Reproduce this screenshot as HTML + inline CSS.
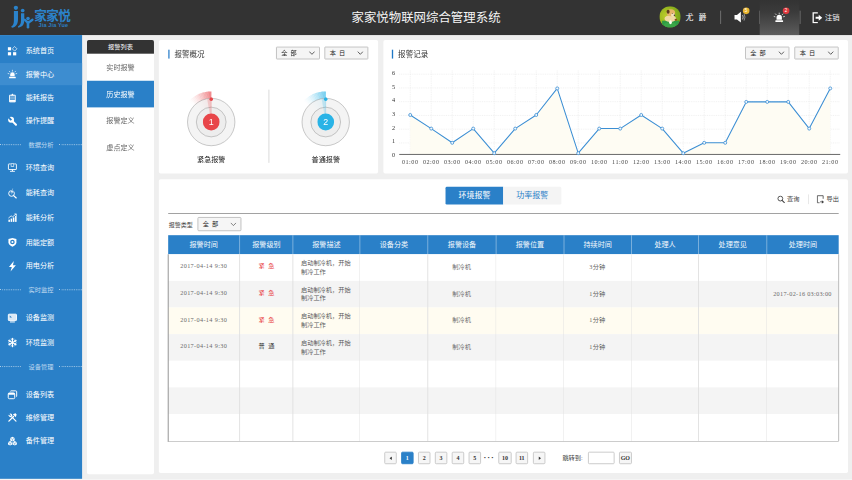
<!DOCTYPE html><html><head><meta charset="utf-8"><title>家家悦物联网综合管理系统</title><style>
*{box-sizing:border-box;margin:0;padding:0}
html,body{width:852px;height:480px;overflow:hidden;background:#efefef}
body{font-family:"Liberation Sans","Noto Sans CJK SC",sans-serif;color:#333}
#root{position:absolute;left:0;top:0;width:1920px;height:1082px;transform:scale(0.44375);transform-origin:0 0;overflow:hidden}
#inner{position:absolute;left:0;top:0;width:1920px;height:1082px}
.abs{position:absolute}
.x{display:inline-block;white-space:nowrap}
.t{position:absolute;white-space:nowrap;line-height:1}
.c{text-align:center}
#hdr{left:0;top:0;width:1920px;height:79px;background:#333}
#side{left:0;top:79px;width:184.5px;height:1000.4px;background:#2a80c8}
.si{position:absolute;left:0;width:184.5px;height:50px}
.si .t{left:58px;top:18px;font-size:16px;color:#fff}
.si svg{position:absolute;left:17px;top:15px;width:22px;height:22px;overflow:visible}
.si.act{background:#3d8dd0}
.sec{position:absolute;left:0;width:184.5px;height:20px}
.sec .t{left:0;width:184.5px;text-align:center;font-size:14px;color:#c0daf0;top:3px;letter-spacing:0}
.sec i{position:absolute;top:8.6px;height:0;border-top:2px dotted rgba(255,255,255,.62)}
#sub{left:196px;top:90px;width:151px;height:979px;background:#fff;border-radius:4px;overflow:hidden}
#sub .h{position:absolute;left:0;top:0;width:100%;height:31px;background:#333;color:#fff;font-size:14px;text-align:center;line-height:33px}
#sub .it{position:absolute;left:0;width:100%;height:60.5px;font-size:16px;line-height:61.5px;text-align:center;color:#666}
#sub .it.act{background:#2a80c8;color:#fff}
.panel{position:absolute;background:#fff;border-radius:4px}
.ptitle{position:absolute;font-size:17px;color:#333;line-height:20px;white-space:nowrap}
.pbar{position:absolute;width:3px;height:20px;background:#1f78c6}
.sel{position:absolute;height:29.5px;margin-top:-1px;background:#f5f5f5;border:2px solid #bcbcbc;border-radius:2px;font-size:14px;line-height:25px;color:#222;padding-left:10px;white-space:nowrap;letter-spacing:1.5px}
.sel svg{position:absolute;right:9px;top:8px;width:14px;height:9px}
.th{position:absolute;top:0;height:43px;line-height:43px;text-align:center;color:#f3f8fc;font-size:16px;border-left:2px solid rgba(255,255,255,.42);white-space:nowrap}
.row{position:absolute;left:0;width:100%;height:60px}
.cell{position:absolute;top:0;height:60px;font-size:14px;color:#5a5a5a;white-space:nowrap}
.num{font-family:"Liberation Serif",serif;letter-spacing:.8px;color:#6a6a6a}
.pg{position:absolute;top:0;height:28px;width:28px;border:2px solid #c6c6c6;border-radius:3px;background:#f6f6f6;font-family:"Liberation Serif",serif;font-size:13.5px;font-weight:bold;line-height:24.5px;text-align:center;color:#333}
</style></head><body><div id="root"><div id="inner">
<div id="hdr" class="abs">
<svg class="abs" style="left:0;top:0;width:81.1px;height:78.9px" viewBox="0 0 36 35">
<g fill="#2b83cb"><path d="M13.9 11 H18 V19.5 C18 24.6 15.6 27.1 11.9 27.7 L11.3 26.3 C13.5 25.4 13.9 23.2 13.9 20 Z"/><path d="M21 13.2 H24.3 V20.6 C24.3 24.9 22 27.1 18.4 27.7 L17.9 26.4 C20.1 25.5 21 23.6 21 20.8 Z"/><circle cx="15.9" cy="7.8" r="2.15"/><circle cx="22.7" cy="10.5" r="1.85"/><circle cx="28" cy="18.6" r="1.8"/></g><g fill="none" stroke="#2b83cb" stroke-linecap="round"><path d="M24.8 19.7 L28 23 L32.5 19.7" stroke-width="2.3"/><path d="M28 23 L28 27.2" stroke-width="2.6"/></g>
</svg>
<div class="t lg" style="left:77.3px;top:19.8px;font-size:28.5px;letter-spacing:-1.5px;color:#2b83cb;font-weight:bold"><span class="x" style="width:82.5px">家家悦</span></div>
<div class="t" style="left:86.8px;top:50.3px;font-weight:bold;font-size:12.5px;color:#2b7fc4;letter-spacing:.3px">Jia Jia Yue</div>
<div class="t c" style="left:660px;width:600px;top:26px;font-size:28px;color:#f6f6f6"><span class="x" style="width:336px">家家悦物联网综合管理系统</span></div>
<svg class="abs" style="left:1486.3px;top:14.299999999999997px;width:48px;height:48px" viewBox="0 0 48 48">
<defs><clipPath id="av"><circle cx="24" cy="24" r="24"/></clipPath><radialGradient id="avg" cx="0.3" cy="0.45" r="0.8"><stop offset="0" stop-color="#bccb2a"/><stop offset="0.6" stop-color="#8fb21c"/><stop offset="1" stop-color="#6f9a1a"/></radialGradient></defs><g clip-path="url(#av)"><rect width="48" height="48" fill="url(#avg)"/><path d="M6 33 H44 V48 H6 Z" fill="#2f9b45"/><ellipse cx="24" cy="42" rx="14" ry="6" fill="#3aa648"/><ellipse cx="24.5" cy="28" rx="13" ry="7.5" fill="#f0d9a4"/><ellipse cx="25.8" cy="14.6" rx="9.6" ry="8" fill="#e7b469"/><ellipse cx="19.6" cy="12.4" rx="3.4" ry="4.6" fill="#5e3c1d"/><ellipse cx="30.6" cy="19.6" rx="4.4" ry="3.8" fill="#f5e2bd"/><circle cx="33.8" cy="20.6" r="1.7" fill="#3a3230"/><circle cx="29" cy="16.6" r="1.1" fill="#3a3230"/><ellipse cx="25" cy="36" rx="3" ry="4.4" fill="#fffdf6"/><ellipse cx="37" cy="30.4" rx="2.8" ry="2.2" fill="#8a4a1e"/></g></svg>
<div class="t" style="left:1545.0px;top:29px;font-size:18px;color:#fff;letter-spacing:3px"><span class="x" style="width:50.02px">尤 爵</span></div>
<div class="abs" style="left:1622.5px;top:24px;width:2px;height:30px;background:#757575"></div>
<div class="abs" style="left:1711.3px;top:24px;width:2px;height:30px;background:#757575"></div>
<div class="abs" style="left:1801.5px;top:24px;width:2px;height:30px;background:#757575"></div>
<div class="abs" style="left:1712.2px;top:0;width:89.2px;height:79px;background:linear-gradient(#333 0%,#3b3b3b 35%,#5c5c5c 100%)"></div>
<svg class="abs" style="left:1654.1px;top:24.5px;width:30px;height:27.5px" viewBox="0 0 27 25"><path d="M1 8 H6 L14 1.5 V23.5 L6 17 H1 Z" fill="#fff"/><path d="M17.5 8 Q20 12.5 17.5 17" fill="none" stroke="#ddd" stroke-width="1.6"/><path d="M20.5 5.5 Q24.5 12.5 20.5 19.5" fill="none" stroke="#bbb" stroke-width="1.4"/></svg>
<div class="abs c" style="left:1673.6px;top:16.6px;width:15px;height:15px;border-radius:8px;background:#e9b52f;color:#fff;font-size:10px;line-height:15px">5</div>
<svg class="abs" style="left:1742.9px;top:28px;width:26px;height:22.5px" viewBox="0 0 30 26"><path d="M8 19 V13 A7 7 0 0 1 22 13 V19 Z" fill="#fff"/><rect x="5" y="20.5" width="20" height="4.5" rx="1" fill="#fff"/><g stroke="#fff" stroke-width="1.8" stroke-linecap="round"><path d="M15 0.8 V3.6"/><path d="M5.2 3.8 L7.2 6"/><path d="M24.8 3.8 L22.8 6"/><path d="M1.2 10.5 L4 11.3"/><path d="M28.8 10.5 L26 11.3"/></g></svg>
<div class="abs c" style="left:1763.8px;top:17.1px;width:15px;height:15px;border-radius:8px;background:#e0393e;color:#fff;font-size:10px;line-height:15px">2</div>
<svg class="abs" style="left:1830.3px;top:27px;width:24px;height:26px" viewBox="0 0 24 26"><path d="M13 2 H2.5 V24 H13" fill="none" stroke="#fff" stroke-width="3"/><path d="M8 10.5 H15 V6 L23 13 L15 20 V15.5 H8 Z" fill="#fff"/></svg>
<div class="t" style="left:1859.2px;top:30.5px;font-size:16.5px;color:#f4f4f4"><span class="x" style="width:34px">注销</span></div>
</div>
<div id="side" class="abs">
<div class="si" style="top:10.0px"><svg viewBox="0 0 22 22"><g fill="#fff"><rect x="0.8" y="2.4" width="7.2" height="7.2"/><rect x="0.8" y="13.6" width="7.2" height="7.2"/><rect x="12.4" y="13.6" width="7.2" height="7.2"/></g><path d="M16 0.8 L21.2 6 L16 11.2 L10.8 6 Z" fill="none" stroke="#fff" stroke-width="1.5"/></svg><div class="t"><span class="x" style="width:64px">系统首页</span></div></div>
<div class="si act" style="top:63.2px"><svg viewBox="0 0 22 22"><path d="M6 15 V11 A5 5 0 0 1 16 11 V15 Z" fill="#fff"/><rect x="3.5" y="16" width="15" height="3.6" rx=".8" fill="#fff"/><g stroke="#fff" stroke-width="1.5" stroke-linecap="round"><path d="M11 1.2 V3.4"/><path d="M4 3.6 L5.5 5.2"/><path d="M18 3.6 L16.5 5.2"/><path d="M1.2 8.6 L3.2 9.2"/><path d="M20.8 8.6 L18.8 9.2"/></g></svg><div class="t"><span class="x" style="width:64px">报警中心</span></div></div>
<div class="si" style="top:115.7px"><svg viewBox="0 0 22 22"><path d="M4.6 4.6 H17.4 V19.6 H4.6 Z" fill="none" stroke="#fff" stroke-width="2.2"/><path d="M7.5 5 L11 0.8 L14.5 5 Z" fill="#fff"/><g stroke="#fff" stroke-width="1"><path d="M6 8.3 H16"/><path d="M6 10.8 H16"/><path d="M6 13.3 H16"/></g><rect x="5" y="15.4" width="12" height="4" fill="#fff"/></svg><div class="t"><span class="x" style="width:64px">能耗报告</span></div></div>
<div class="si" style="top:167.8px"><svg viewBox="0 0 22 22"><circle cx="8" cy="8" r="6.7" fill="#fff"/><path d="M8.6 8.6 L1.2 1.2" stroke="#2a80c8" stroke-width="4.4"/><path d="M11.5 11.5 L19 19" stroke="#fff" stroke-width="4.6" stroke-linecap="round"/></svg><div class="t"><span class="x" style="width:64px">操作提醒</span></div></div>
<div class="sec" style="top:237.5px"><i style="left:0;width:47px"></i><div class="t"><span class="x" style="width:56px">数据分析</span></div><i style="left:134px;width:51px"></i></div>
<div class="si" style="top:273.2px"><svg viewBox="0 0 22 22"><rect x="2" y="2.5" width="18" height="12.5" rx="1" fill="none" stroke="#fff" stroke-width="2"/><rect x="7" y="1" width="8" height="8" fill="#2a80c8"/><rect x="8" y="2" width="6" height="6" fill="none" stroke="#fff" stroke-width="1.4"/><rect x="9.8" y="15" width="2.4" height="3.4" fill="#fff"/><rect x="5.5" y="18" width="11" height="2" fill="#fff"/></svg><div class="t"><span class="x" style="width:64px">环境查询</span></div></div>
<div class="si" style="top:330.0px"><svg viewBox="0 0 22 22"><circle cx="9" cy="12" r="6.4" fill="none" stroke="#fff" stroke-width="2.2"/><path d="M13.8 16.8 L19.6 22" stroke="#fff" stroke-width="2.8" stroke-linecap="round"/><path d="M12 0 L6.2 9.6 H9.4 L8 15.4 L14 6.6 H10.6 L12.8 0 Z" fill="#fff" stroke="#2a80c8" stroke-width=".9"/></svg><div class="t"><span class="x" style="width:64px">能耗查询</span></div></div>
<div class="si" style="top:386.4px"><svg viewBox="0 0 22 22"><g fill="#fff"><rect x="2" y="15" width="3.4" height="5"/><rect x="7" y="12.5" width="3.4" height="7.5"/><rect x="12" y="10" width="3.4" height="10"/><rect x="17" y="6.5" width="3.4" height="13.5"/></g><path d="M2 11.5 L8 6.5 L11.5 8.5 L19 2.5" fill="none" stroke="#fff" stroke-width="1.8"/><path d="M15.5 2 H20 V6.5" fill="none" stroke="#fff" stroke-width="1.6"/></svg><div class="t"><span class="x" style="width:64px">能耗分析</span></div></div>
<div class="si" style="top:440.9px"><svg viewBox="0 0 22 22"><path d="M11 1.2 L20 3.8 V11 Q20 17.2 11 21 Q2 17.2 2 11 V3.8 Z" fill="#fff"/><circle cx="11" cy="10.4" r="5.2" fill="#2a80c8"/><circle cx="11" cy="10.4" r="2.3" fill="#fff"/></svg><div class="t"><span class="x" style="width:64px">用能定额</span></div></div>
<div class="si" style="top:494.8px"><svg viewBox="0 0 22 22"><path d="M14.2 -1 L3.2 12.6 H9.6 L6.8 23 L18.8 8.6 H12.2 Z" fill="#fff"/></svg><div class="t"><span class="x" style="width:64px">用电分析</span></div></div>
<div class="sec" style="top:564.7px"><i style="left:0;width:47px"></i><div class="t"><span class="x" style="width:56px">实时监控</span></div><i style="left:134px;width:51px"></i></div>
<div class="si" style="top:612.2px"><svg viewBox="0 0 22 22"><rect x="1.8" y="2" width="18.4" height="14.4" rx="1.5" fill="#dbe9f6" stroke="#fff" stroke-width="2"/><path d="M5 5 L10 9.5 L5 9.5 Z" fill="#2a80c8"/><rect x="5.5" y="18.4" width="11" height="2.2" fill="#fff"/></svg><div class="t"><span class="x" style="width:64px">设备监测</span></div></div>
<div class="si" style="top:667.4px"><svg viewBox="0 0 22 22"><g stroke="#fff" stroke-width="2.6" stroke-linecap="round"><path d="M11 1.5 V20.5"/><path d="M2.8 6.2 L19.2 15.8"/><path d="M19.2 6.2 L2.8 15.8"/></g><g stroke="#fff" stroke-width="1.9" fill="none"><path d="M8 2.4 L11 5.4 L14 2.4"/><path d="M8 19.6 L11 16.6 L14 19.6"/><path d="M2 9.8 L6 8.2 L5 4"/><path d="M20 12.2 L16 13.8 L17 18"/><path d="M20 9.8 L16 8.2 L17 4"/><path d="M2 12.2 L6 13.8 L5 18"/></g></svg><div class="t"><span class="x" style="width:64px">环境监测</span></div></div>
<div class="sec" style="top:737.1px"><i style="left:0;width:47px"></i><div class="t"><span class="x" style="width:56px">设备管理</span></div><i style="left:134px;width:51px"></i></div>
<div class="si" style="top:784.6px"><svg viewBox="0 0 22 22"><rect x="1.6" y="6.5" width="14.5" height="13" rx="2.4" fill="none" stroke="#fff" stroke-width="2.2"/><rect x="1.6" y="6.5" width="14.5" height="4" rx="1.5" fill="#fff"/><path d="M6.5 3 Q6.5 1.8 8 1.8 H18.4 Q20.6 1.8 20.6 4 V13.5 Q20.6 15 19.4 15" fill="none" stroke="#fff" stroke-width="2.2"/></svg><div class="t"><span class="x" style="width:64px">设备列表</span></div></div>
<div class="si" style="top:836.4px"><svg viewBox="0 0 22 22"><path d="M3 19 L13.5 8.5" stroke="#fff" stroke-width="3" stroke-linecap="round"/><path d="M12 3.5 L18 1.5 L20.5 4 L18.5 10 Z" fill="#fff"/><path d="M19 19 L9.5 9.5" stroke="#fff" stroke-width="2.6" stroke-linecap="round"/><circle cx="6.5" cy="6" r="4" fill="#fff"/><path d="M3 2.5 L7 6.5" stroke="#2a80c8" stroke-width="2.4"/></svg><div class="t"><span class="x" style="width:64px">维修管理</span></div></div>
<div class="si" style="top:888.5px"><svg viewBox="0 0 22 22"><g fill="#fff"><path d="M11 1.5 L16 4.2 V9.5 L11 12.2 L6 9.5 V4.2 Z"/><path d="M5.8 11 L10.6 13.6 V18.6 L5.8 21.2 L1 18.6 V13.6 Z"/><path d="M16.2 11 L21 13.6 V18.6 L16.2 21.2 L11.4 18.6 V13.6 Z"/></g><g stroke="#2a80c8" stroke-width="1" fill="none"><path d="M6 4.2 L11 6.9 L16 4.2 M11 6.9 V12"/><path d="M1 13.6 L5.8 16.2 L10.6 13.6 M5.8 16.2 V21"/><path d="M11.4 13.6 L16.2 16.2 L21 13.6 M16.2 16.2 V21"/></g></svg><div class="t"><span class="x" style="width:64px">备件管理</span></div></div>
</div>
<div id="sub" class="abs"><div class="h"><span class="x" style="width:56px">报警列表</span></div>
<div class="it" style="top:31.0px"><span class="x" style="width:64px">实时报警</span></div>
<div class="it act" style="top:91.5px"><span class="x" style="width:64px">历史报警</span></div>
<div class="it" style="top:152.0px"><span class="x" style="width:64px">报警定义</span></div>
<div class="it" style="top:212.5px"><span class="x" style="width:64px">虚点定义</span></div>
</div>
<div class="panel" style="left:358px;top:90px;width:494px;height:301px">
<div class="pbar" style="left:20.8px;top:21.5px"></div>
<div class="ptitle" style="left:35.0px;top:22.6px"><span class="x" style="width:68px">报警概况</span></div>
<div class="sel" style="left:264.0px;top:15.5px;width:98.7px"><span class="x" style="width:36.39px">全 部</span><svg viewBox="0 0 14 9"><path d="M1 1.2 L7 7.4 L13 1.2" fill="none" stroke="#444" stroke-width="1.9"/></svg></div>
<div class="sel" style="left:373.0px;top:15.5px;width:99.2px"><span class="x" style="width:36.39px">本 日</span><svg viewBox="0 0 14 9"><path d="M1 1.2 L7 7.4 L13 1.2" fill="none" stroke="#444" stroke-width="1.9"/></svg></div>
<svg class="abs" style="left:38.1px;top:104.7px;width:160px;height:160px" viewBox="-80 -80 160 160"><path d="M0 0 L-50.46 -47.06 A69 69 0 0 1 -47.64 -49.92 Z" fill="#e8464a" fill-opacity="0.007"/><path d="M0 0 L-47.99 -49.58 A69 69 0 0 1 -45.02 -52.29 Z" fill="#e8464a" fill-opacity="0.022"/><path d="M0 0 L-45.38 -51.98 A69 69 0 0 1 -42.28 -54.53 Z" fill="#e8464a" fill-opacity="0.043"/><path d="M0 0 L-42.66 -54.23 A69 69 0 0 1 -39.43 -56.62 Z" fill="#e8464a" fill-opacity="0.067"/><path d="M0 0 L-39.82 -56.35 A69 69 0 0 1 -36.48 -58.57 Z" fill="#e8464a" fill-opacity="0.096"/><path d="M0 0 L-36.88 -58.32 A69 69 0 0 1 -33.43 -60.36 Z" fill="#e8464a" fill-opacity="0.129"/><path d="M0 0 L-33.85 -60.13 A69 69 0 0 1 -30.29 -62.00 Z" fill="#e8464a" fill-opacity="0.165"/><path d="M0 0 L-30.72 -61.78 A69 69 0 0 1 -27.07 -63.47 Z" fill="#e8464a" fill-opacity="0.205"/><path d="M0 0 L-27.51 -63.28 A69 69 0 0 1 -23.78 -64.77 Z" fill="#e8464a" fill-opacity="0.247"/><path d="M0 0 L-24.23 -64.60 A69 69 0 0 1 -20.43 -65.91 Z" fill="#e8464a" fill-opacity="0.292"/><path d="M0 0 L-20.89 -65.76 A69 69 0 0 1 -17.03 -66.87 Z" fill="#e8464a" fill-opacity="0.340"/><path d="M0 0 L-17.49 -66.75 A69 69 0 0 1 -13.58 -67.65 Z" fill="#e8464a" fill-opacity="0.391"/><path d="M0 0 L-14.05 -67.55 A69 69 0 0 1 -10.09 -68.26 Z" fill="#e8464a" fill-opacity="0.445"/><path d="M0 0 L-10.57 -68.19 A69 69 0 0 1 -6.58 -68.69 Z" fill="#e8464a" fill-opacity="0.501"/><path d="M0 0 L-7.06 -68.64 A69 69 0 0 1 -3.05 -68.93 Z" fill="#e8464a" fill-opacity="0.559"/><path d="M0 0 L-3.54 -68.91 A69 69 0 0 1 0.48 -69.00 Z" fill="#e8464a" fill-opacity="0.620"/><circle r="53.4" fill="#f2f2f2" fill-opacity=".86" stroke="#9a9a9a" stroke-width="1.2"/><circle r="33.5" fill="#ececec" fill-opacity=".9" stroke="#9a9a9a" stroke-width="1.2"/><path d="M0 0 L-9.03 -51.21 A52 52 0 0 1 0 -52 Z" fill="#e8464a" fill-opacity=".2"/><path d="M0 0 V-52" stroke="#e8464a" stroke-width="1.2" opacity=".35"/><circle cx="0" cy="-51.6" r="4" fill="#e8464a"/><circle r="19" fill="#e8464a"/><text x="0" y="6.8" text-anchor="middle" font-family="Liberation Sans, sans-serif" font-size="20" fill="#fff">1</text></svg>
<svg class="abs" style="left:295.7px;top:104.7px;width:160px;height:160px" viewBox="-80 -80 160 160"><path d="M0 0 L-50.46 -47.06 A69 69 0 0 1 -47.64 -49.92 Z" fill="#29b3e6" fill-opacity="0.007"/><path d="M0 0 L-47.99 -49.58 A69 69 0 0 1 -45.02 -52.29 Z" fill="#29b3e6" fill-opacity="0.022"/><path d="M0 0 L-45.38 -51.98 A69 69 0 0 1 -42.28 -54.53 Z" fill="#29b3e6" fill-opacity="0.043"/><path d="M0 0 L-42.66 -54.23 A69 69 0 0 1 -39.43 -56.62 Z" fill="#29b3e6" fill-opacity="0.067"/><path d="M0 0 L-39.82 -56.35 A69 69 0 0 1 -36.48 -58.57 Z" fill="#29b3e6" fill-opacity="0.096"/><path d="M0 0 L-36.88 -58.32 A69 69 0 0 1 -33.43 -60.36 Z" fill="#29b3e6" fill-opacity="0.129"/><path d="M0 0 L-33.85 -60.13 A69 69 0 0 1 -30.29 -62.00 Z" fill="#29b3e6" fill-opacity="0.165"/><path d="M0 0 L-30.72 -61.78 A69 69 0 0 1 -27.07 -63.47 Z" fill="#29b3e6" fill-opacity="0.205"/><path d="M0 0 L-27.51 -63.28 A69 69 0 0 1 -23.78 -64.77 Z" fill="#29b3e6" fill-opacity="0.247"/><path d="M0 0 L-24.23 -64.60 A69 69 0 0 1 -20.43 -65.91 Z" fill="#29b3e6" fill-opacity="0.292"/><path d="M0 0 L-20.89 -65.76 A69 69 0 0 1 -17.03 -66.87 Z" fill="#29b3e6" fill-opacity="0.340"/><path d="M0 0 L-17.49 -66.75 A69 69 0 0 1 -13.58 -67.65 Z" fill="#29b3e6" fill-opacity="0.391"/><path d="M0 0 L-14.05 -67.55 A69 69 0 0 1 -10.09 -68.26 Z" fill="#29b3e6" fill-opacity="0.445"/><path d="M0 0 L-10.57 -68.19 A69 69 0 0 1 -6.58 -68.69 Z" fill="#29b3e6" fill-opacity="0.501"/><path d="M0 0 L-7.06 -68.64 A69 69 0 0 1 -3.05 -68.93 Z" fill="#29b3e6" fill-opacity="0.559"/><path d="M0 0 L-3.54 -68.91 A69 69 0 0 1 0.48 -69.00 Z" fill="#29b3e6" fill-opacity="0.620"/><circle r="53.4" fill="#f2f2f2" fill-opacity=".86" stroke="#9a9a9a" stroke-width="1.2"/><circle r="33.5" fill="#ececec" fill-opacity=".9" stroke="#9a9a9a" stroke-width="1.2"/><path d="M0 0 L-9.03 -51.21 A52 52 0 0 1 0 -52 Z" fill="#29b3e6" fill-opacity=".2"/><path d="M0 0 V-52" stroke="#29b3e6" stroke-width="1.2" opacity=".35"/><circle cx="0" cy="-51.6" r="4" fill="#29b3e6"/><circle r="19" fill="#29b3e6"/><text x="0" y="6.8" text-anchor="middle" font-family="Liberation Sans, sans-serif" font-size="20" fill="#fff">2</text></svg>
<div class="abs" style="left:246.9px;top:111.5px;width:2.2px;height:165.4px;background:#d6d6d6"></div>
<div class="t c" style="left:18.1px;width:200px;top:261.0px;font-size:16px;color:#222"><span class="x" style="width:64px">紧急报警</span></div>
<div class="t c" style="left:276.2px;width:200px;top:261.0px;font-size:16px;color:#222"><span class="x" style="width:64px">普通报警</span></div>
</div>
<div class="panel" style="left:863.5px;top:90px;width:1047.5px;height:301px">
<div class="pbar" style="left:19.5px;top:21.5px"></div>
<div class="ptitle" style="left:33.6px;top:22.6px"><span class="x" style="width:68px">报警记录</span></div>
<div class="sel" style="left:815.4px;top:15.5px;width:100.3px"><span class="x" style="width:36.39px">全 部</span><svg viewBox="0 0 14 9"><path d="M1 1.2 L7 7.4 L13 1.2" fill="none" stroke="#444" stroke-width="1.9"/></svg></div>
<div class="sel" style="left:926.5px;top:15.5px;width:99.8px"><span class="x" style="width:36.39px">本 日</span><svg viewBox="0 0 14 9"><path d="M1 1.2 L7 7.4 L13 1.2" fill="none" stroke="#444" stroke-width="1.9"/></svg></div>
<svg class="abs" style="left:0;top:0;width:1046.5px;height:301px" viewBox="383.178 39.938 464.384 133.569"><path d="M399 142.95 H840" stroke="#e3e3e3" stroke-width=".5" stroke-dasharray="1 .8"/><path d="M399 129.20 H840" stroke="#e3e3e3" stroke-width=".5" stroke-dasharray="1 .8"/><path d="M399 115.45 H840" stroke="#e3e3e3" stroke-width=".5" stroke-dasharray="1 .8"/><path d="M399 101.70 H840" stroke="#e3e3e3" stroke-width=".5" stroke-dasharray="1 .8"/><path d="M399 87.95 H840" stroke="#e3e3e3" stroke-width=".5" stroke-dasharray="1 .8"/><path d="M399 74.20 H840" stroke="#e3e3e3" stroke-width=".5" stroke-dasharray="1 .8"/><path d="M410.00 70.5 V154" stroke="#e3e3e3" stroke-width=".5" stroke-dasharray="1 .8"/><path d="M431.00 70.5 V154" stroke="#e3e3e3" stroke-width=".5" stroke-dasharray="1 .8"/><path d="M452.00 70.5 V154" stroke="#e3e3e3" stroke-width=".5" stroke-dasharray="1 .8"/><path d="M473.00 70.5 V154" stroke="#e3e3e3" stroke-width=".5" stroke-dasharray="1 .8"/><path d="M494.00 70.5 V154" stroke="#e3e3e3" stroke-width=".5" stroke-dasharray="1 .8"/><path d="M515.00 70.5 V154" stroke="#e3e3e3" stroke-width=".5" stroke-dasharray="1 .8"/><path d="M536.00 70.5 V154" stroke="#e3e3e3" stroke-width=".5" stroke-dasharray="1 .8"/><path d="M557.00 70.5 V154" stroke="#e3e3e3" stroke-width=".5" stroke-dasharray="1 .8"/><path d="M578.00 70.5 V154" stroke="#e3e3e3" stroke-width=".5" stroke-dasharray="1 .8"/><path d="M599.00 70.5 V154" stroke="#e3e3e3" stroke-width=".5" stroke-dasharray="1 .8"/><path d="M620.00 70.5 V154" stroke="#e3e3e3" stroke-width=".5" stroke-dasharray="1 .8"/><path d="M641.00 70.5 V154" stroke="#e3e3e3" stroke-width=".5" stroke-dasharray="1 .8"/><path d="M662.00 70.5 V154" stroke="#e3e3e3" stroke-width=".5" stroke-dasharray="1 .8"/><path d="M683.00 70.5 V154" stroke="#e3e3e3" stroke-width=".5" stroke-dasharray="1 .8"/><path d="M704.00 70.5 V154" stroke="#e3e3e3" stroke-width=".5" stroke-dasharray="1 .8"/><path d="M725.00 70.5 V154" stroke="#e3e3e3" stroke-width=".5" stroke-dasharray="1 .8"/><path d="M746.00 70.5 V154" stroke="#e3e3e3" stroke-width=".5" stroke-dasharray="1 .8"/><path d="M767.00 70.5 V154" stroke="#e3e3e3" stroke-width=".5" stroke-dasharray="1 .8"/><path d="M788.00 70.5 V154" stroke="#e3e3e3" stroke-width=".5" stroke-dasharray="1 .8"/><path d="M809.00 70.5 V154" stroke="#e3e3e3" stroke-width=".5" stroke-dasharray="1 .8"/><path d="M830.00 70.5 V154" stroke="#e3e3e3" stroke-width=".5" stroke-dasharray="1 .8"/><polygon points="410.00,154 410.00,115.00 431.00,128.60 452.00,142.80 473.00,128.60 494.00,153.20 515.00,128.60 536.00,115.00 557.00,88.40 578.00,153.20 599.00,128.60 620.00,128.60 641.00,115.00 662.00,128.60 683.00,153.20 704.00,142.80 725.00,142.80 746.00,101.90 767.00,101.90 788.00,101.90 809.00,128.60 830.00,88.40 830.00,154" fill="#fefcf3"/><path d="M399 154.45 H840" stroke="#585858" stroke-width=".9"/><polyline points="410.00,115.00 431.00,128.60 452.00,142.80 473.00,128.60 494.00,153.20 515.00,128.60 536.00,115.00 557.00,88.40 578.00,153.20 599.00,128.60 620.00,128.60 641.00,115.00 662.00,128.60 683.00,153.20 704.00,142.80 725.00,142.80 746.00,101.90 767.00,101.90 788.00,101.90 809.00,128.60 830.00,88.40" fill="none" stroke="#3b8ed4" stroke-width="1.05" stroke-linejoin="round"/><circle cx="410.00" cy="115.00" r="1.5" fill="#f4f9fd" stroke="#3b8ed4" stroke-width=".8"/><circle cx="431.00" cy="128.60" r="1.5" fill="#f4f9fd" stroke="#3b8ed4" stroke-width=".8"/><circle cx="452.00" cy="142.80" r="1.5" fill="#f4f9fd" stroke="#3b8ed4" stroke-width=".8"/><circle cx="473.00" cy="128.60" r="1.5" fill="#f4f9fd" stroke="#3b8ed4" stroke-width=".8"/><circle cx="494.00" cy="153.20" r="1.5" fill="#f4f9fd" stroke="#3b8ed4" stroke-width=".8"/><circle cx="515.00" cy="128.60" r="1.5" fill="#f4f9fd" stroke="#3b8ed4" stroke-width=".8"/><circle cx="536.00" cy="115.00" r="1.5" fill="#f4f9fd" stroke="#3b8ed4" stroke-width=".8"/><circle cx="557.00" cy="88.40" r="1.5" fill="#f4f9fd" stroke="#3b8ed4" stroke-width=".8"/><circle cx="578.00" cy="153.20" r="1.5" fill="#f4f9fd" stroke="#3b8ed4" stroke-width=".8"/><circle cx="599.00" cy="128.60" r="1.5" fill="#f4f9fd" stroke="#3b8ed4" stroke-width=".8"/><circle cx="620.00" cy="128.60" r="1.5" fill="#f4f9fd" stroke="#3b8ed4" stroke-width=".8"/><circle cx="641.00" cy="115.00" r="1.5" fill="#f4f9fd" stroke="#3b8ed4" stroke-width=".8"/><circle cx="662.00" cy="128.60" r="1.5" fill="#f4f9fd" stroke="#3b8ed4" stroke-width=".8"/><circle cx="683.00" cy="153.20" r="1.5" fill="#f4f9fd" stroke="#3b8ed4" stroke-width=".8"/><circle cx="704.00" cy="142.80" r="1.5" fill="#f4f9fd" stroke="#3b8ed4" stroke-width=".8"/><circle cx="725.00" cy="142.80" r="1.5" fill="#f4f9fd" stroke="#3b8ed4" stroke-width=".8"/><circle cx="746.00" cy="101.90" r="1.5" fill="#f4f9fd" stroke="#3b8ed4" stroke-width=".8"/><circle cx="767.00" cy="101.90" r="1.5" fill="#f4f9fd" stroke="#3b8ed4" stroke-width=".8"/><circle cx="788.00" cy="101.90" r="1.5" fill="#f4f9fd" stroke="#3b8ed4" stroke-width=".8"/><circle cx="809.00" cy="128.60" r="1.5" fill="#f4f9fd" stroke="#3b8ed4" stroke-width=".8"/><circle cx="830.00" cy="88.40" r="1.5" fill="#f4f9fd" stroke="#3b8ed4" stroke-width=".8"/><text x="393.4" y="157.05" text-anchor="middle" font-family="Liberation Serif, serif" font-size="6.2" fill="#333">0</text><text x="393.4" y="143.40" text-anchor="middle" font-family="Liberation Serif, serif" font-size="6.2" fill="#333">1</text><text x="393.4" y="129.75" text-anchor="middle" font-family="Liberation Serif, serif" font-size="6.2" fill="#333">2</text><text x="393.4" y="116.10" text-anchor="middle" font-family="Liberation Serif, serif" font-size="6.2" fill="#333">3</text><text x="393.4" y="102.45" text-anchor="middle" font-family="Liberation Serif, serif" font-size="6.2" fill="#333">4</text><text x="393.4" y="88.80" text-anchor="middle" font-family="Liberation Serif, serif" font-size="6.2" fill="#333">5</text><text x="393.4" y="75.15" text-anchor="middle" font-family="Liberation Serif, serif" font-size="6.2" fill="#333">6</text><text x="410.00" y="163.7" text-anchor="middle" font-family="Liberation Serif, serif" font-size="6.2" letter-spacing=".5" fill="#4a4a4a">01:00</text><text x="431.00" y="163.7" text-anchor="middle" font-family="Liberation Serif, serif" font-size="6.2" letter-spacing=".5" fill="#4a4a4a">02:00</text><text x="452.00" y="163.7" text-anchor="middle" font-family="Liberation Serif, serif" font-size="6.2" letter-spacing=".5" fill="#4a4a4a">03:00</text><text x="473.00" y="163.7" text-anchor="middle" font-family="Liberation Serif, serif" font-size="6.2" letter-spacing=".5" fill="#4a4a4a">04:00</text><text x="494.00" y="163.7" text-anchor="middle" font-family="Liberation Serif, serif" font-size="6.2" letter-spacing=".5" fill="#4a4a4a">05:00</text><text x="515.00" y="163.7" text-anchor="middle" font-family="Liberation Serif, serif" font-size="6.2" letter-spacing=".5" fill="#4a4a4a">06:00</text><text x="536.00" y="163.7" text-anchor="middle" font-family="Liberation Serif, serif" font-size="6.2" letter-spacing=".5" fill="#4a4a4a">07:00</text><text x="557.00" y="163.7" text-anchor="middle" font-family="Liberation Serif, serif" font-size="6.2" letter-spacing=".5" fill="#4a4a4a">08:00</text><text x="578.00" y="163.7" text-anchor="middle" font-family="Liberation Serif, serif" font-size="6.2" letter-spacing=".5" fill="#4a4a4a">09:00</text><text x="599.00" y="163.7" text-anchor="middle" font-family="Liberation Serif, serif" font-size="6.2" letter-spacing=".5" fill="#4a4a4a">10:00</text><text x="620.00" y="163.7" text-anchor="middle" font-family="Liberation Serif, serif" font-size="6.2" letter-spacing=".5" fill="#4a4a4a">11:00</text><text x="641.00" y="163.7" text-anchor="middle" font-family="Liberation Serif, serif" font-size="6.2" letter-spacing=".5" fill="#4a4a4a">12:00</text><text x="662.00" y="163.7" text-anchor="middle" font-family="Liberation Serif, serif" font-size="6.2" letter-spacing=".5" fill="#4a4a4a">13:00</text><text x="683.00" y="163.7" text-anchor="middle" font-family="Liberation Serif, serif" font-size="6.2" letter-spacing=".5" fill="#4a4a4a">14:00</text><text x="704.00" y="163.7" text-anchor="middle" font-family="Liberation Serif, serif" font-size="6.2" letter-spacing=".5" fill="#4a4a4a">15:00</text><text x="725.00" y="163.7" text-anchor="middle" font-family="Liberation Serif, serif" font-size="6.2" letter-spacing=".5" fill="#4a4a4a">16:00</text><text x="746.00" y="163.7" text-anchor="middle" font-family="Liberation Serif, serif" font-size="6.2" letter-spacing=".5" fill="#4a4a4a">17:00</text><text x="767.00" y="163.7" text-anchor="middle" font-family="Liberation Serif, serif" font-size="6.2" letter-spacing=".5" fill="#4a4a4a">18:00</text><text x="788.00" y="163.7" text-anchor="middle" font-family="Liberation Serif, serif" font-size="6.2" letter-spacing=".5" fill="#4a4a4a">19:00</text><text x="809.00" y="163.7" text-anchor="middle" font-family="Liberation Serif, serif" font-size="6.2" letter-spacing=".5" fill="#4a4a4a">20:00</text><text x="830.00" y="163.7" text-anchor="middle" font-family="Liberation Serif, serif" font-size="6.2" letter-spacing=".5" fill="#4a4a4a">21:00</text></svg>
</div>
<div class="panel" style="left:358px;top:403.5px;width:1553px;height:662.7px">
<div class="abs c" style="left:646.2px;top:17.0px;width:130.3px;height:40px;background:#2a80c8;color:#fff;font-size:18px;line-height:40px;border-radius:3px 0 0 3px"><span class="x" style="width:72px">环境报警</span></div>
<div class="abs c" style="left:776.4px;top:17.0px;width:130.4px;height:40px;background:#f4f4f4;color:#2a80c8;font-size:18px;line-height:40px;border-radius:0 3px 3px 0"><span class="x" style="width:72px">功率报警</span></div>
<svg class="abs" style="left:1393.4px;top:36.2px;width:18px;height:18px" viewBox="0 0 18 18"><circle cx="7.5" cy="7.5" r="5.4" fill="none" stroke="#444" stroke-width="2"/><path d="M11.5 11.5 L16.5 16.5" stroke="#444" stroke-width="2.4" stroke-linecap="round"/></svg>
<div class="t sg" style="left:1415.5px;top:38.2px;font-size:14px;color:#444"><span class="x" style="width:28px">查询</span></div>
<div class="abs" style="left:1463.5px;top:34.2px;width:1.5px;height:22px;background:#ccc"></div>
<svg class="abs" style="left:1482.0px;top:35.2px;width:18px;height:20px" viewBox="0 0 18 20"><path d="M7 18 H2 V2 H15 V9" fill="none" stroke="#444" stroke-width="1.8"/><path d="M8 15 H12 V12 L17 16 L12 20 V17 H8 Z" fill="#444"/></svg>
<div class="t sg" style="left:1504.5px;top:38.2px;font-size:14px;color:#444"><span class="x" style="width:28px">导出</span></div>
<div class="abs" style="left:20.6px;top:76.8px;width:1511.2px;height:1.8px;background:#979797"></div>
<div class="t sg" style="left:22.3px;top:96.1px;font-size:13.5px;color:#444"><span class="x" style="width:56px">报警类型</span></div>
<div class="sel" style="left:87.1px;top:86.4px;width:99.4px;height:32px;line-height:27px;background:#f6f6f6;border-color:#bbb;border-radius:3px;color:#222"><span class="x" style="width:36.39px">全 部</span><svg viewBox="0 0 14 9" style="top:10px"><path d="M1 1.2 L7 7.4 L13 1.2" fill="none" stroke="#555" stroke-width="1.6"/></svg></div>
<div class="abs" style="left:20.600000000000023px;top:126.5px;width:1511.1999999999998px;height:465px">
<div class="abs" style="left:0;top:0;width:100%;height:43px;background:#2a80c8"></div>
<div class="row" style="top:43px;background:#fff">
<div class="cell num c" style="left:0.0px;width:160.9px;line-height:56.5px;font-size:14px">2017-04-14 9:30</div>
<div class="cell c" style="left:160.9px;width:119.7px;line-height:55px;padding-left:4px;color:#e8393c;letter-spacing:2px"><span class="x" style="width:37.89px">紧 急</span></div>
<div class="cell" style="left:280.6px;width:150.7px;padding-left:19.1px;line-height:20px;padding-top:8.5px"><span class="x" style="width:112px">启动制冷机，开始</span><br><span class="x" style="width:56px">制冷工作</span></div>
<div class="cell c" style="left:584.8px;width:153.4px;line-height:57px;color:#6c6c6c"><span class="x" style="width:42px">制冷机</span></div>
<div class="cell c" style="left:891.0px;width:152.4px;line-height:57px"><span class="num">3</span><span class="x" style="width:28px">分钟</span></div>
</div>
<div class="row" style="top:103px;background:#f4f4f4">
<div class="cell num c" style="left:0.0px;width:160.9px;line-height:56.5px;font-size:14px">2017-04-14 9:30</div>
<div class="cell c" style="left:160.9px;width:119.7px;line-height:55px;padding-left:4px;color:#e8393c;letter-spacing:2px"><span class="x" style="width:37.89px">紧 急</span></div>
<div class="cell" style="left:280.6px;width:150.7px;padding-left:19.1px;line-height:20px;padding-top:8.5px"><span class="x" style="width:112px">启动制冷机，开始</span><br><span class="x" style="width:56px">制冷工作</span></div>
<div class="cell c" style="left:584.8px;width:153.4px;line-height:57px;color:#6c6c6c"><span class="x" style="width:42px">制冷机</span></div>
<div class="cell c" style="left:891.0px;width:152.4px;line-height:57px"><span class="num">1</span><span class="x" style="width:28px">分钟</span></div>
<div class="cell num c" style="left:1348.4px;width:162.8px;line-height:60px;font-size:14px;letter-spacing:.7px">2017-02-16 03:03:00</div>
</div>
<div class="row" style="top:163px;background:#fffcf1">
<div class="cell num c" style="left:0.0px;width:160.9px;line-height:56.5px;font-size:14px">2017-04-14 9:30</div>
<div class="cell c" style="left:160.9px;width:119.7px;line-height:55px;padding-left:4px;color:#e8393c;letter-spacing:2px"><span class="x" style="width:37.89px">紧 急</span></div>
<div class="cell" style="left:280.6px;width:150.7px;padding-left:19.1px;line-height:20px;padding-top:8.5px"><span class="x" style="width:112px">启动制冷机，开始</span><br><span class="x" style="width:56px">制冷工作</span></div>
<div class="cell c" style="left:584.8px;width:153.4px;line-height:57px;color:#6c6c6c"><span class="x" style="width:42px">制冷机</span></div>
<div class="cell c" style="left:891.0px;width:152.4px;line-height:57px"><span class="num">1</span><span class="x" style="width:28px">分钟</span></div>
</div>
<div class="row" style="top:223px;background:#f4f4f4">
<div class="cell num c" style="left:0.0px;width:160.9px;line-height:56.5px;font-size:14px">2017-04-14 9:30</div>
<div class="cell c" style="left:160.9px;width:119.7px;line-height:55px;padding-left:4px;color:#333;letter-spacing:2px"><span class="x" style="width:37.89px">普 通</span></div>
<div class="cell" style="left:280.6px;width:150.7px;padding-left:19.1px;line-height:20px;padding-top:8.5px"><span class="x" style="width:112px">启动制冷机，开始</span><br><span class="x" style="width:56px">制冷工作</span></div>
<div class="cell c" style="left:584.8px;width:153.4px;line-height:57px;color:#6c6c6c"><span class="x" style="width:42px">制冷机</span></div>
<div class="cell c" style="left:891.0px;width:152.4px;line-height:57px"><span class="num">1</span><span class="x" style="width:28px">分钟</span></div>
</div>
<div class="row" style="top:283px;background:#fff">
</div>
<div class="row" style="top:343px;background:#f4f4f4">
</div>
<div class="row" style="top:403px;background:#fff;height:62px">
</div>
<div class="th" style="left:0.0px;width:160.9px;border-left:none"><span class="x" style="width:64px">报警时间</span></div>
<div class="th" style="left:160.9px;width:119.7px"><span class="x" style="width:64px">报警级别</span></div>
<div class="abs" style="left:160.9px;top:43px;width:1.5px;height:421px;background:#e0e0e0"></div>
<div class="th" style="left:280.6px;width:150.7px"><span class="x" style="width:64px">报警描述</span></div>
<div class="abs" style="left:280.6px;top:43px;width:1.5px;height:421px;background:#e0e0e0"></div>
<div class="th" style="left:431.3px;width:153.5px"><span class="x" style="width:64px">设备分类</span></div>
<div class="abs" style="left:431.3px;top:43px;width:1.5px;height:421px;background:#e0e0e0"></div>
<div class="th" style="left:584.8px;width:153.4px"><span class="x" style="width:64px">报警设备</span></div>
<div class="abs" style="left:584.8px;top:43px;width:1.5px;height:421px;background:#e0e0e0"></div>
<div class="th" style="left:738.2px;width:152.8px"><span class="x" style="width:64px">报警位置</span></div>
<div class="abs" style="left:738.2px;top:43px;width:1.5px;height:421px;background:#e0e0e0"></div>
<div class="th" style="left:891.0px;width:152.4px"><span class="x" style="width:64px">持续时间</span></div>
<div class="abs" style="left:891.0px;top:43px;width:1.5px;height:421px;background:#e0e0e0"></div>
<div class="th" style="left:1043.4px;width:151.5px"><span class="x" style="width:48px">处理人</span></div>
<div class="abs" style="left:1043.4px;top:43px;width:1.5px;height:421px;background:#e0e0e0"></div>
<div class="th" style="left:1194.9px;width:153.5px"><span class="x" style="width:64px">处理意见</span></div>
<div class="abs" style="left:1194.9px;top:43px;width:1.5px;height:421px;background:#e0e0e0"></div>
<div class="th" style="left:1348.4px;width:162.8px"><span class="x" style="width:64px">处理时间</span></div>
<div class="abs" style="left:1348.4px;top:43px;width:1.5px;height:421px;background:#e0e0e0"></div>
<div class="abs" style="left:-.2px;top:43px;width:1.7px;height:422px;background:#888"></div>
<div class="abs" style="left:-1px;top:463.6px;width:1512.1999999999998px;height:1.8px;background:#8c8c8c"></div>
<div class="abs" style="left:1510.1999999999998px;top:43px;width:1.8px;height:421px;background:#b4b4b4"></div>
</div>
<div class="abs" style="left:0;top:614.9px;width:100%;height:28px">
<div class="pg" style="left:508px;width:28px"><svg style="position:absolute;left:9px;top:8px;width:7px;height:9px" viewBox="0 0 7 9"><path d="M6 0.5 V8.5 L0.8 4.5 Z" fill="#333"/></svg></div>
<div class="pg" style="left:546px;width:28px;background:#2a80c8;border-color:#2a80c8;color:#fff">1</div>
<div class="pg" style="left:584px;width:28px">2</div>
<div class="pg" style="left:622px;width:28px">3</div>
<div class="pg" style="left:660px;width:28px">4</div>
<div class="pg" style="left:698px;width:28px">5</div>
<div class="t c" style="left:725px;width:40px;top:3px;font-size:18px;color:#333;letter-spacing:2.5px;font-weight:bold">···</div>
<div class="pg" style="left:765px;width:30px">10</div>
<div class="pg" style="left:803.5px;width:28.5px">11</div>
<div class="pg" style="left:842.5px;width:28px"><svg style="position:absolute;left:10px;top:8px;width:7px;height:9px" viewBox="0 0 7 9"><path d="M1 0.5 V8.5 L6.2 4.5 Z" fill="#333"/></svg></div>
<div class="t sg" style="left:909.4px;top:7px;font-size:14px;color:#444"><span class="x" style="width:42px">跳转到</span>:</div>
<div class="pg" style="left:967.1px;width:59.9px;background:#fff"></div>
<div class="pg" style="left:1036.7px;width:29px;font-family:"Liberation Sans",sans-serif;font-size:11.5px;letter-spacing:-.3px">GO</div>
</div>
</div>
<div class="abs" style="left:0;top:1079.6px;width:1920px;height:4px;background:#f8f8f8"></div>
</div></div></body></html>
